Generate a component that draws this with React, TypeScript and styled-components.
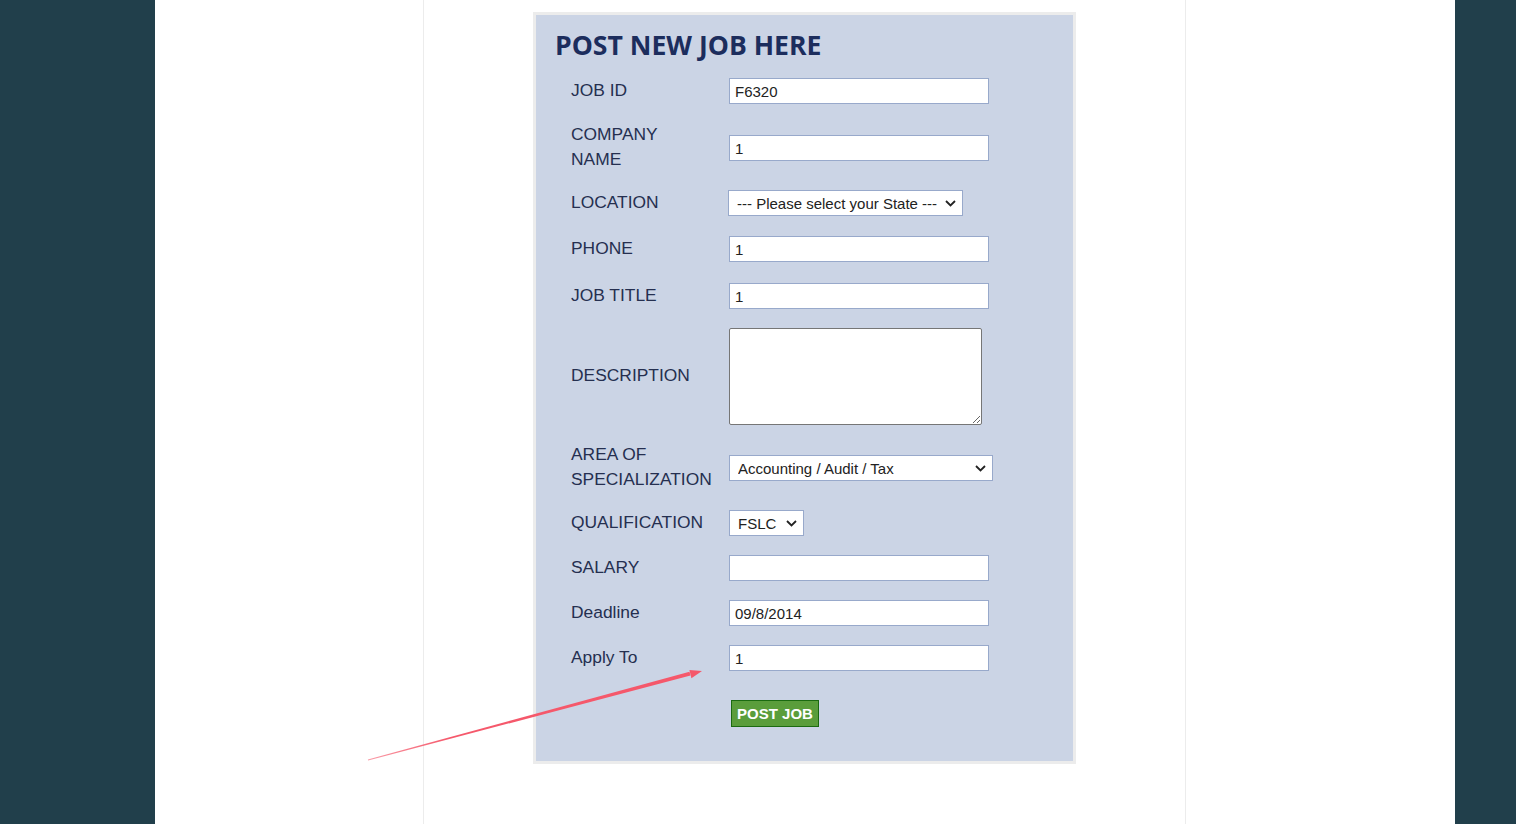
import React from "react";
import styled, { createGlobalStyle } from "styled-components";

const Global = createGlobalStyle`
  html, body { margin: 0; padding: 0; }
  body { background: #213f4b; font-family: "Liberation Sans", Arial, sans-serif; }
`;

const Page = styled.div`
  position: relative;
  display: flex;
  min-height: 824px;
  padding-left: 155px;
  background: #213f4b;
  overflow: hidden;
`;

const Main = styled.main`
  width: 1300px;
  background: #ffffff;
  display: flex;
`;

const Column = styled.div`
  margin-left: 268px;
  width: 763px;
  box-sizing: border-box;
  border-left: 1px solid #ececec;
  border-right: 1px solid #ececec;
  min-height: 824px;
`;

const FormBox = styled.section`
  box-sizing: border-box;
  width: 543px;
  margin: 12px auto 0;
  border: 3px solid #ececec;
  background: #cbd4e5;
  padding: 12px 0 34px;
`;

const Heading = styled.h1`
  margin: 0;
  padding-left: 19px;
  font-family: "Open Sans", "Liberation Sans", sans-serif;
  font-weight: 700;
  font-size: 26.6px;
  line-height: 36px;
  color: #1c2d5d;
`;

const Form = styled.form`
  margin-top: 15px;
  padding-left: 35px;
  display: flex;
  flex-direction: column;
`;

const Row = styled.div<{ $top: number }>`
  display: flex;
  align-items: center;
  margin-top: ${(p) => p.$top}px;
`;

const Label = styled.label`
  width: 158px;
  flex: none;
  margin-top: -3px;
  margin-bottom: -1px;
  font-size: 17.4px;
  line-height: 25px;
  color: #252f50;
`;

const TextInput = styled.input`
  box-sizing: border-box;
  width: 260px;
  height: 26px;
  margin: 0;
  padding: 0 5px;
  border: 1px solid #98a9cb;
  border-radius: 0;
  background: #fff;
  font-family: "Liberation Sans", Arial, sans-serif;
  font-size: 15px;
  color: #222;
  outline: none;
`;

const TextArea = styled.textarea`
  box-sizing: border-box;
  width: 253px;
  height: 97px;
  margin: 0;
  padding: 4px;
  border: 1px solid #767676;
  border-radius: 2px;
  background: #fff;
  font-family: "Liberation Sans", Arial, sans-serif;
  font-size: 15px;
  outline: none;
`;

const SelectWrap = styled.div<{ $w: number; $shift?: number }>`
  position: relative;
  width: ${(p) => p.$w}px;
  height: 26px;
  margin-left: ${(p) => p.$shift ?? 0}px;
`;

const Select = styled.select`
  appearance: none;
  -webkit-appearance: none;
  box-sizing: border-box;
  width: 100%;
  height: 26px;
  margin: 0;
  padding: 0 24px 0 8px;
  border: 1px solid #98a9cb;
  border-radius: 0;
  background: #fff;
  font-family: "Liberation Sans", Arial, sans-serif;
  font-size: 15px;
  color: #222;
  outline: none;
`;

const Chevron = styled.svg`
  position: absolute;
  right: 7px;
  top: 10px;
  width: 11px;
  height: 7px;
  pointer-events: none;
`;

const SubmitButton = styled.button`
  box-sizing: border-box;
  margin: 0 0 0 160px;
  width: 88px;
  height: 27px;
  padding: 0;
  border: 1px solid #1b6a10;
  background: #5a9d3b;
  color: #fff;
  font-family: "Liberation Sans", Arial, sans-serif;
  font-weight: 700;
  font-size: 15px;
  cursor: pointer;
`;

const Overlay = styled.svg`
  position: absolute;
  left: 0;
  top: 0;
  width: 1516px;
  height: 824px;
  pointer-events: none;
`;

const Arrow = () => (
  <Chevron viewBox="0 0 11 7">
    <path d="M1 1 L5.5 5.5 L10 1" fill="none" stroke="#222" strokeWidth="1.8" />
  </Chevron>
);

const Dropdown: React.FC<{ w: number; shift?: number; value: string; options: string[] }> = ({
  w,
  shift,
  value,
  options,
}) => (
  <SelectWrap $w={w} $shift={shift}>
    <Select defaultValue={value}>
      {options.map((o) => (
        <option key={o}>{o}</option>
      ))}
    </Select>
    <Arrow />
  </SelectWrap>
);

export default function App() {
  return (
    <>
      <Global />
      <Page>
        <Main>
          <Column>
            <FormBox>
              <Heading>POST NEW JOB HERE</Heading>
              <Form onSubmit={(e) => e.preventDefault()}>
                <Row $top={0}>
                  <Label>JOB ID</Label>
                  <TextInput defaultValue="F6320" />
                </Row>
                <Row $top={21}>
                  <Label>
                    COMPANY
                    <br />
                    NAME
                  </Label>
                  <TextInput defaultValue="1" />
                </Row>
                <Row $top={19}>
                  <Label>LOCATION</Label>
                  <Dropdown
                    w={235}
                    shift={-1}
                    value="--- Please select your State ---"
                    options={["--- Please select your State ---", "Lagos", "Abuja", "Rivers"]}
                  />
                </Row>
                <Row $top={20}>
                  <Label>PHONE</Label>
                  <TextInput defaultValue="1" />
                </Row>
                <Row $top={21}>
                  <Label>JOB TITLE</Label>
                  <TextInput defaultValue="1" />
                </Row>
                <Row $top={19}>
                  <Label>DESCRIPTION</Label>
                  <TextArea />
                </Row>
                <Row $top={20}>
                  <Label>AREA OF SPECIALIZATION</Label>
                  <Dropdown
                    w={264}
                    value="Accounting / Audit / Tax"
                    options={["Accounting / Audit / Tax", "Banking / Finance", "Engineering"]}
                  />
                </Row>
                <Row $top={19}>
                  <Label>QUALIFICATION</Label>
                  <Dropdown w={75} value="FSLC" options={["FSLC", "SSCE", "OND", "HND", "BSc"]} />
                </Row>
                <Row $top={19}>
                  <Label>SALARY</Label>
                  <TextInput defaultValue="" />
                </Row>
                <Row $top={19}>
                  <Label>Deadline</Label>
                  <TextInput defaultValue="09/8/2014" />
                </Row>
                <Row $top={19}>
                  <Label>Apply To</Label>
                  <TextInput defaultValue="1" />
                </Row>
                <Row $top={29}>
                  <SubmitButton type="submit">POST JOB</SubmitButton>
                </Row>
              </Form>
            </FormBox>
          </Column>
        </Main>
        <Overlay viewBox="0 0 1516 824">
          <defs>
            <linearGradient id="fade" x1="368" y1="760" x2="702" y2="671" gradientUnits="userSpaceOnUse">
              <stop offset="0" stopColor="#f5586b" stopOpacity="0.6" />
              <stop offset="0.25" stopColor="#f5586b" stopOpacity="1" />
              <stop offset="1" stopColor="#f5586b" stopOpacity="1" />
            </linearGradient>
          </defs>
          <polygon points="368.1,760.6 690.5,675.4 689.5,671.7 367.9,759.6" fill="url(#fade)" />
          <polygon points="702,671 691.4,678.2 689.4,670" fill="#f5586b" />
        </Overlay>
      </Page>
    </>
  );
}
